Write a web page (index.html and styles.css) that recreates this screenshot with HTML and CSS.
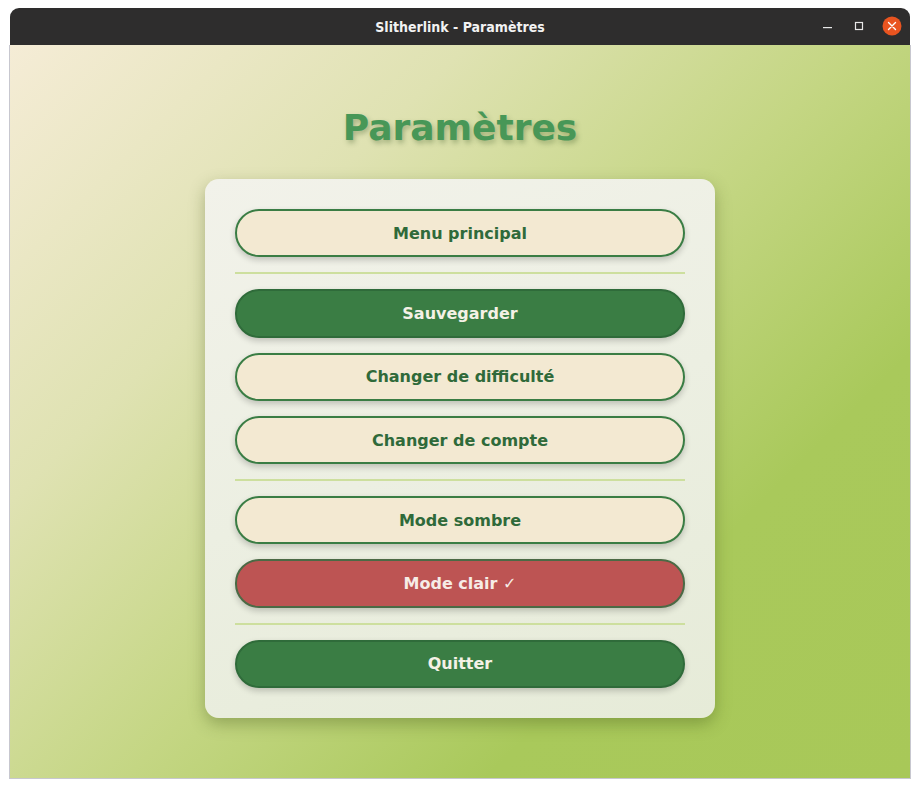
FILE: index.html
```html
<!DOCTYPE html>
<html lang="fr">
<head>
<meta charset="utf-8">
<title>Slitherlink - Paramètres</title>
<link rel="stylesheet" href="styles.css">
</head>
<body>
<div class="window">
  <div class="titlebar">
    <span class="title">Slitherlink - Paramètres</span>
    <div class="controls">
      <svg class="ctl" width="16" height="16" viewBox="0 0 16 16"><rect x="3" y="9" width="9" height="1.2" fill="#e8e8e8"/></svg>
      <svg class="ctl" width="16" height="16" viewBox="0 0 16 16"><rect x="4.5" y="4.5" width="7" height="7" fill="none" stroke="#e8e8e8" stroke-width="1.2"/></svg>
      <svg class="ctl close" width="20" height="20" viewBox="0 0 20 20"><circle cx="10" cy="10" r="9.5" fill="#e95420"/><path d="M6.5 6.5 L13.5 13.5 M13.5 6.5 L6.5 13.5" stroke="#ffffff" stroke-width="1.4" stroke-linecap="round"/></svg>
    </div>
  </div>
  <div class="content">
    <h1 class="heading">Paramètres</h1>
    <div class="card">
      <button class="btn light">Menu principal</button>
      <div class="divider"></div>
      <button class="btn dark">Sauvegarder</button>
      <button class="btn light">Changer de difficulté</button>
      <button class="btn light">Changer de compte</button>
      <div class="divider"></div>
      <button class="btn light">Mode sombre</button>
      <button class="btn red">Mode clair ✓</button>
      <div class="divider"></div>
      <button class="btn dark">Quitter</button>
    </div>
  </div>
</div>
</body>
</html>
```
FILE: styles.css
```css
* { box-sizing: border-box; }
html, body {
  margin: 0;
  padding: 0;
  background: #ffffff;
}
body {
  width: 920px;
  height: 788px;
  overflow: hidden;
}
.window {
  margin: 8px 0 0 9px;
  width: 902px;
}
.titlebar {
  position: relative;
  height: 37px;
  margin: 0 1px;
  background: #2e2d2d;
  border-radius: 9px 9px 0 0;
  display: flex;
  align-items: center;
  justify-content: center;
}
.title {
  font-family: "DejaVu Sans Condensed", "DejaVu Sans", sans-serif;
  font-stretch: condensed;
  font-weight: bold;
  font-size: 14px;
  color: #f2f2f2;
  letter-spacing: 0;
}
.controls {
  position: absolute;
  right: 8px;
  top: 8px;
  display: flex;
  align-items: center;
  gap: 15px;
}
.ctl { display: block; }
.content {
  height: 734px;
  border: 1px solid #c7c7cf;
  border-top: none;
  background: linear-gradient(135deg, #f5ecd6 0%, #dfe2b2 28%, #c4d683 52%, #a9c95b 74%, #a8c858 100%);
  display: flex;
  flex-direction: column;
  align-items: center;
}
.heading {
  margin: 61px 0 29px;
  height: 44px;
  line-height: 44px;
  font-family: "DejaVu Sans", sans-serif;
  font-weight: bold;
  font-size: 36px;
  color: #489757;
  text-shadow: 2px 3px 5px rgba(60, 90, 40, 0.35);
}
.card {
  width: 510px;
  padding: 30px;
  border-radius: 14px;
  background: linear-gradient(160deg, #f2f2ea 0%, #ecefe2 50%, #e6ebd8 100%);
  box-shadow: 0 6px 16px rgba(60, 80, 20, 0.35);
  display: flex;
  flex-direction: column;
  gap: 15px;
}
.btn {
  height: 48.3px;
  border-radius: 24px;
  border: 2px solid #3a7d44;
  font-family: "DejaVu Sans", sans-serif;
  font-weight: bold;
  font-size: 16px;
  box-shadow: 0 3px 6px rgba(0, 0, 0, 0.2);
  padding: 0;
}
.light {
  background: #f3e9d2;
  color: #2f6a3a;
}
.dark {
  background: #3a7d44;
  border-color: #2f6b3a;
  color: #f4f1e6;
}
.red {
  background: #bd5453;
  border-color: #4b6a45;
  color: #f6ece6;
}
.divider {
  height: 2px;
  background: #cddf9e;
}
```
